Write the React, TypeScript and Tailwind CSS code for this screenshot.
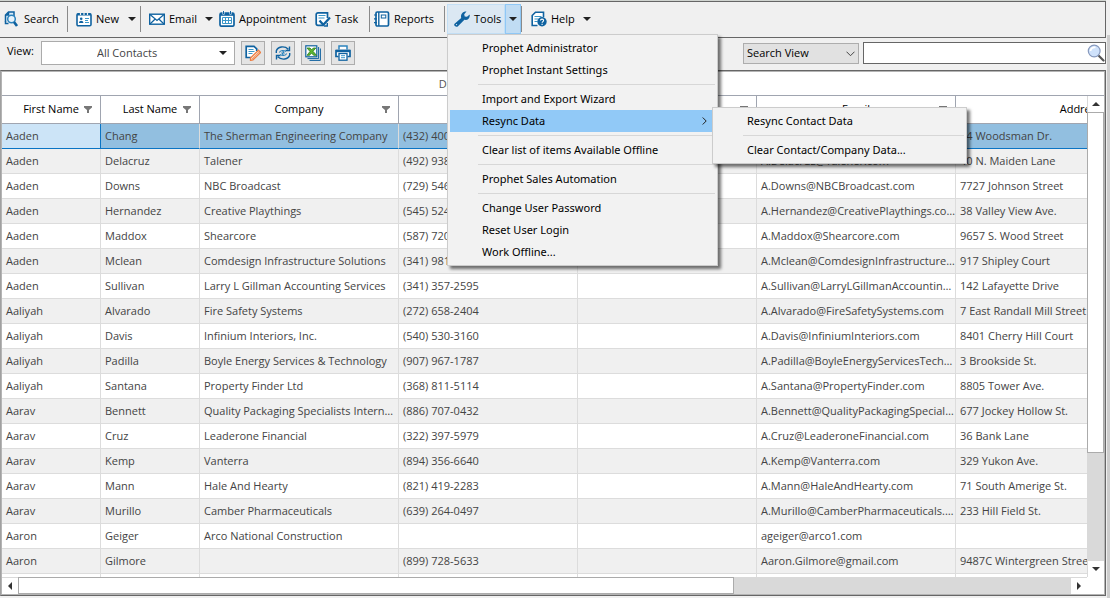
import React from "react";

type Contact = [string, string, string, string, string, string];

const contacts: Contact[] = [
  ["Aaden", "Chang", "The Sherman Engineering Company", "(432) 400-2171", "A.Chang@ShermanEngineering.com", "94 Woodsman Dr."],
  ["Aaden", "Delacruz", "Talener", "(492) 938-4410", "A.Delacruz@Talener.com", "40 N. Maiden Lane"],
  ["Aaden", "Downs", "NBC Broadcast", "(729) 546-3302", "A.Downs@NBCBroadcast.com", "7727 Johnson Street"],
  ["Aaden", "Hernandez", "Creative Playthings", "(545) 524-1198", "A.Hernandez@CreativePlaythings.com", "38 Valley View Ave."],
  ["Aaden", "Maddox", "Shearcore", "(587) 720-6054", "A.Maddox@Shearcore.com", "9657 S. Wood Street"],
  ["Aaden", "Mclean", "Comdesign Infrastructure Solutions", "(341) 981-7720", "A.Mclean@ComdesignInfrastructure.com", "917 Shipley Court"],
  ["Aaden", "Sullivan", "Larry L Gillman Accounting Services", "(341) 357-2595", "A.Sullivan@LarryLGillmanAccounting.com", "142 Lafayette Drive"],
  ["Aaliyah", "Alvarado", "Fire Safety Systems", "(272) 658-2404", "A.Alvarado@FireSafetySystems.com", "7 East Randall Mill Street"],
  ["Aaliyah", "Davis", "Infinium Interiors, Inc.", "(540) 530-3160", "A.Davis@InfiniumInteriors.com", "8401 Cherry Hill Court"],
  ["Aaliyah", "Padilla", "Boyle Energy Services & Technology", "(907) 967-1787", "A.Padilla@BoyleEnergyServicesTechnology.com", "3 Brookside St."],
  ["Aaliyah", "Santana", "Property Finder Ltd", "(368) 811-5114", "A.Santana@PropertyFinder.com", "8805 Tower Ave."],
  ["Aarav", "Bennett", "Quality Packaging Specialists International", "(886) 707-0432", "A.Bennett@QualityPackagingSpecialists.com", "677 Jockey Hollow St."],
  ["Aarav", "Cruz", "Leaderone Financial", "(322) 397-5979", "A.Cruz@LeaderoneFinancial.com", "36 Bank Lane"],
  ["Aarav", "Kemp", "Vanterra", "(894) 356-6640", "A.Kemp@Vanterra.com", "329 Yukon Ave."],
  ["Aarav", "Mann", "Hale And Hearty", "(821) 419-2283", "A.Mann@HaleAndHearty.com", "71 South Amerige St."],
  ["Aarav", "Murillo", "Camber Pharmaceuticals", "(639) 264-0497", "A.Murillo@CamberPharmaceuticals.com", "233 Hill Field St."],
  ["Aaron", "Geiger", "Arco National Construction", "", "ageiger@arco1.com", ""],
  ["Aaron", "Gilmore", "", "(899) 728-5633", "Aaron.Gilmore@gmail.com", "9487C Wintergreen Street"],
  ["", "", "", "", "", ""],
];

const Svg = ({ children, size = 16 }: { children: React.ReactNode; size?: number }) => (
  <svg width={size} height={size} viewBox="0 0 16 16" fill="none" stroke="#0f62a0" strokeWidth="1.5" aria-hidden="true" className="shrink-0">
    {children}
  </svg>
);

const SearchDocIcon = () => (
  <Svg>
    <path d="M1.5 11V4l3-3H10v4" fill="#dcecf7" />
    <path d="M1.500 4.500h3.500V1z" fill="#0f62a0" strokeWidth=".5" />
    <path d="M1.500 10.500v2h3" />
    <circle cx="7.500" cy="8" r="3.800" fill="#e8f3fb" stroke="#2b83bd" />
    <path d="M10 11l3 4" strokeWidth="2.600" />
  </Svg>
);
const NewIcon = () => (
  <Svg>
    <rect x="1" y="2.700" width="14" height="12" rx="1.300" fill="#fff" strokeWidth="1.600" />
    <path d="M1 3.500h14" strokeWidth="2" />
    <path d="M4.500 1v3M8 1v3M11.500 1v3" stroke="#f0f0f0" strokeWidth="1.200" />
    <circle cx="5.200" cy="7.800" r="1.300" fill="#0f62a0" stroke="none" />
    <path d="M3 12c0-3 4.400-3 4.400 0z" fill="#0f62a0" stroke="none" />
    <path d="M9 7.500h4M9 9.500h3M9 11.500h4" strokeWidth="1" stroke="#3b97c9" />
  </Svg>
);
const EmailIcon = () => (
  <Svg>
    <rect x=".7" y="3.200" width="14.600" height="10" fill="#fff" strokeWidth="1.400" />
    <path d="M1 3.500l7 6 7-6M1 13l5.200-5M15 13L9.800 8" strokeWidth="1.200" />
  </Svg>
);
const CalendarIcon = () => (
  <Svg>
    <rect x="1" y="2.200" width="14" height="13" rx="1.500" fill="#fff" strokeWidth="1.700" />
    <path d="M1 3.500h14" strokeWidth="2.600" />
    <path d="M4.500 0v3.400M11.500 0v3.400" stroke="#fff" strokeWidth="2" />
    <path d="M4.500 0v3M11.500 0v3" strokeWidth="1" />
    <path d="M3.500 6.500h9v6h-9zM3.500 9.500h9M6.500 6.500v6M9.500 6.500v6" stroke="#3b97c9" strokeWidth="1" />
  </Svg>
);
const TaskIcon = () => (
  <Svg>
    <path d="M12.500 7V1.800H3A1.800 1.800 0 0 0 1.200 3.600v9A1.800 1.800 0 0 0 3 14.400h5" fill="#fff" strokeWidth="1.700" />
    <path d="M3.500 4.500h7M3.500 7h6" strokeWidth="1" stroke="#3b97c9" />
    <path d="M4.500 9.500l3.800 4.300L15 6.500" strokeWidth="2.200" />
    <path d="M12.300 12v3H9" strokeWidth="1.400" />
  </Svg>
);
const ReportsIcon = () => (
  <Svg>
    <rect x="2" y="1" width="12.500" height="14" rx="1.200" fill="#fff" strokeWidth="1.700" />
    <path d="M4.800 1v14" strokeWidth="1.400" />
    <path d="M0 4h3M0 7.800h3M0 11.600h3" strokeWidth="1.200" />
    <rect x="7.300" y="4" width="4.500" height="3" strokeWidth="1" />
  </Svg>
);
const WrenchIcon = () => (
  <Svg>
    <path
      d="M.6 12.700 7.200 6.900C6.300 3.500 8.700.3 12.500.6L10.200 3.200l.5 2.200 2.300.4L15.700 3.500c.6 3.600-2.100 6.100-5.300 5.300L4 15.200C2.200 16.700-1 14.600.6 12.700z"
      fill="#0f62a0"
      stroke="none"
    />
    <circle cx="2.500" cy="13.600" r=".7" fill="#dbe8f4" stroke="none" />
  </Svg>
);
const HelpIcon = () => (
  <Svg>
    <path d="M12.500 6V1.200H4.500L1.200 4.500v10h5.300" fill="#fff" strokeWidth="1.600" />
    <path d="M3.500 5.500h7M3.500 8h4M3.500 10.500h3" strokeWidth="1" stroke="#3b97c9" />
    <circle cx="11" cy="10.800" r="4.700" fill="#0f62a0" stroke="none" />
    <path d="M9.500 9.600c0-2 3.100-2 3.100 0 0 1-1.500 1-1.500 2.200M11.100 12.700v1.200" stroke="#fff" strokeWidth="1.100" />
  </Svg>
);
const EditIcon = () => (
  <Svg>
    <path d="M6 12.500H1.200V1.300H9l2.700 2.500V6" fill="#fff" strokeWidth="1.700" />
    <path d="M3.500 4.500h5M3.500 6.500h6M3.500 8.500h4" strokeWidth="1" stroke="#3b97c9" />
    <path d="M5.500 13L13.500 5.300l2 2.200-7.500 7.300-2.500.6z" fill="#fbe3d3" stroke="#ee7f43" strokeWidth="1.300" />
    <path d="M7 14l7-7" stroke="#ee7f43" strokeWidth=".7" />
  </Svg>
);
const RefreshIcon = () => (
  <Svg>
    <path d="M1.300 8V6C2.500 1.500 9.500.5 13.300 4.200M14.500 1.500v4h-4" strokeWidth="1.400" />
    <path d="M14.700 8v2c-1.200 4.500-8.200 5.500-12 1.800M1.500 14.500v-4h4" strokeWidth="1.400" />
    <path d="M4.300 7.500c1.200-2.400 4.600-2.600 6.500-.8M11.700 8.500c-1.200 2.400-4.600 2.600-6.500.8M7.500 5.500l1.500 2.500H7l1.500 2.500" stroke="#2b83bd" strokeWidth="1.100" />
  </Svg>
);
const ExcelIcon = () => (
  <Svg>
    <path d="M4.500 15.400h10.900V3.500" strokeWidth="1" />
    <path d="M2.500 13.600h11.100V2" strokeWidth="1" />
    <rect x=".8" y=".8" width="11" height="11" fill="#fff" strokeWidth="1.200" />
    <path d="M2 3h3l1.600 1.800L8.400 3h2.400L8 6.300l3.500 4H8.600L6.500 8 4.600 10.300H2l3-3.800z" fill="#5cb531" stroke="#2d7d1d" strokeWidth=".8" />
  </Svg>
);
const PrintIcon = () => (
  <Svg>
    <path d="M4 4.500V1h8v3.500" fill="#fff" stroke="#2b83bd" />
    <path d="M3.500 11.500H1V5.500h14v6h-2.500" strokeWidth="1.700" fill="#fff" />
    <path d="M1 6h14" strokeWidth="2.400" />
    <rect x="4" y="8.500" width="8" height="6.700" fill="#fff" strokeWidth="1.300" />
    <path d="M6 10.700h4M6 12.700h4" strokeWidth="1" stroke="#3b97c9" />
  </Svg>
);

const Caret = ({ className = "" }: { className?: string }) => (
  <svg width="8" height="4" viewBox="0 0 8 4" className={`shrink-0 ${className}`} aria-hidden="true">
    <path d="M0 0h8L4 4z" fill="#222" />
  </svg>
);

const Funnel = () => (
  <svg width="8" height="7" viewBox="0 0 8 7" className="absolute right-2 top-[10px]" aria-hidden="true">
    <path d="M0 0h8v1.500L5 4v3H3V4L0 1.500z" fill="#777" />
  </svg>
);

const Divider = () => <span className="h-[26px] w-px shrink-0 bg-[#8a8a8a]" />;

const ToolButton = ({ icon, label, className, caret }: { icon: React.ReactNode; label: string; className: string; caret?: boolean }) => (
  <button type="button" className={`flex h-[30px] shrink-0 items-center gap-1 ${className}`}>
    {icon}
    <span className="whitespace-nowrap">{label}</span>
    {caret && <Caret className="ml-auto" />}
  </button>
);

const MenuItem = ({ label, active }: { label: string; active?: boolean }) => (
  <button
    type="button"
    role="menuitem"
    className={`flex h-[22px] w-full items-center justify-between pl-8 pr-2 text-left whitespace-nowrap ${active ? "bg-[#91c9f7]" : ""}`}
  >
    {label}
    {active && (
      <svg width="5" height="8" viewBox="0 0 5 8" fill="none" stroke="#222" aria-hidden="true">
        <path d="M.7.5L4.200 4 .7 7.500" />
      </svg>
    )}
  </button>
);
const MenuLine = () => <div role="separator" className="my-[3px] ml-7 h-px bg-[#d7d7d7]" />;

const menuBox =
  "absolute border border-[#ccc] bg-[#f2f2f2] p-[2px] font-['Noto_Sans','Open_Sans',sans-serif] shadow-[3px_3px_3px_rgba(0,0,0,0.55)]";

const ToolsMenu = () => (
  <div role="menu" className={`${menuBox} left-0 top-[30px] z-20 w-[271px]`}>
    <MenuItem label="Prophet Administrator" />
    <MenuItem label="Prophet Instant Settings" />
    <MenuLine />
    <MenuItem label="Import and Export Wizard" />
    <div className="relative">
      <MenuItem label="Resync Data" active />
      <div role="menu" className={`${menuBox} -top-[3px] left-[262px] w-[255px]`}>
        <MenuItem label="Resync Contact Data" />
        <MenuLine />
        <MenuItem label="Clear Contact/Company Data..." />
      </div>
    </div>
    <MenuLine />
    <MenuItem label="Clear list of items Available Offline" />
    <MenuLine />
    <MenuItem label="Prophet Sales Automation" />
    <MenuLine />
    <MenuItem label="Change User Password" />
    <MenuItem label="Reset User Login" />
    <MenuItem label="Work Offline..." />
  </div>
);

const Toolbar = () => (
  <div className="flex h-[37px] items-center border border-l-0 border-[#666] bg-[#f0f0f0] pb-[2px] pl-1">
    <ToolButton icon={<SearchDocIcon />} label="Search" className="w-[63px]" />
    <Divider />
    <ToolButton icon={<NewIcon />} label="New" className="w-[72px] pl-2 pr-1" caret />
    <Divider />
    <ToolButton icon={<EmailIcon />} label="Email" className="w-[72px] pl-2" caret />
    <ToolButton icon={<CalendarIcon />} label="Appointment" className="w-24 pl-[6px]" />
    <ToolButton icon={<TaskIcon />} label="Task" className="w-[60px] pl-[6px]" />
    <Divider />
    <ToolButton icon={<ReportsIcon />} label="Reports" className="w-[74px] pl-1" />
    <Divider />
    <div className="relative ml-[2px] flex h-[30px] w-[74px] shrink-0">
      <button type="button" className="flex flex-1 items-center gap-1 border border-[#c3dff5] bg-[#dbe8f3] pl-[6px]">
        <WrenchIcon />
        Tools
      </button>
      <button type="button" aria-label="Open tools menu" className="flex w-4 items-center justify-center border border-[#90c8f6] bg-[#c0dcf3]">
        <Caret />
      </button>
      <ToolsMenu />
    </div>
    <Divider />
    <ToolButton icon={<HelpIcon />} label="Help" className="w-[69px] pl-[9px]" caret />
  </div>
);

const IconButton = ({ label, children }: { label: string; children: React.ReactNode }) => (
  <button type="button" aria-label={label} className="flex size-6 shrink-0 items-center justify-center border border-[#adadad] bg-[#e4e4e4]">
    {children}
  </button>
);

const FilterBar = () => (
  <div className="flex h-8 items-center pb-[2px]">
    <div className="flex flex-1 items-center gap-[6px] pl-[7px]">
      <label htmlFor="view" className="w-7 pb-1">View:</label>
      <div className="relative">
        <select id="view" className="block h-6 w-[194px] appearance-none border border-[#ababab] bg-white pl-[55px] text-[#444]">
          <option>All Contacts</option>
        </select>
        <Caret className="pointer-events-none absolute right-2 top-[10px]" />
      </div>
      <IconButton label="Edit view"><EditIcon /></IconButton>
      <IconButton label="Refresh"><RefreshIcon /></IconButton>
      <IconButton label="Export to Excel"><ExcelIcon /></IconButton>
      <IconButton label="Print"><PrintIcon /></IconButton>
    </div>
    <div className="flex w-[363px] shrink-0 items-center gap-1">
      <div className="relative">
        <select aria-label="Search scope" className="block h-[21px] w-[116px] appearance-none border border-[#adadad] bg-[#e1e1e1] pl-[3px]">
          <option>Search View</option>
        </select>
        <svg width="9" height="6" viewBox="0 0 9 6" fill="none" stroke="#444" className="pointer-events-none absolute right-1 top-2" aria-hidden="true">
          <path d="M.5.700l4 4 4-4" />
        </svg>
      </div>
      <div className="relative flex-1">
        <input type="text" aria-label="Search contacts" className="block h-[22px] w-full border border-[#666] bg-white pl-1 pr-6" />
        <svg width="18" height="18" viewBox="0 0 18 18" className="pointer-events-none absolute right-px top-[2px]" aria-hidden="true">
          <path d="M11.500 11.500l5 5" stroke="#555" strokeWidth="2.200" strokeLinecap="round" />
          <circle cx="7.200" cy="7" r="5.900" fill="#cfe2fb" stroke="#8799bd" strokeWidth="1.200" />
          <path d="M3.500 7a4 4 0 0 1 5-3.500" fill="none" stroke="#fff" strokeWidth="1.800" />
        </svg>
      </div>
    </div>
  </div>
);

const headers = ["First Name", "Last Name", "Company", "Phone", "", "Email", "Address"];

const ContactTable = () => (
  <table className="w-[1204px] table-fixed border-separate border-spacing-0 text-[#444]">
    <colgroup>
      <col className="w-[99px]" />
      <col className="w-[99px]" />
      <col className="w-[199px]" />
      <col className="w-[179px]" />
      <col className="w-[179px]" />
      <col className="w-[199px]" />
      <col className="w-[250px]" />
    </colgroup>
    <thead>
      <tr>
        {headers.map((h, i) => (
          <th key={i} scope="col" className="relative h-7 border-b border-r border-[#a0a5b0] p-0 pb-[2px] text-center font-normal text-black">
            {h}
            <Funnel />
          </th>
        ))}
      </tr>
    </thead>
    <tbody>
      {contacts.map(([first, last, company, phone, email, address], r) => {
        const tone = r === 0 ? "bg-[#92bfe0] border-b-[#0a74c4]" : r % 2 ? "bg-[#f0f0f0] border-b-[#dcdcdc]" : "bg-white border-b-[#dcdcdc]";
        return (
          <tr key={r}>
            {[first, last, company, phone, "", email, address].map((value, c) => (
              <td
                key={c}
                className={`h-[25px] truncate border-b border-r py-0 pl-1 ${c === 5 ? "pr-0" : "pr-1"} ${
                  r === 0 && c === 0 ? "border-b-[#0a74c4] border-r-[#0a74c4] bg-[#cce4f7]" : `border-r-[#dcdcdc] ${tone}`
                }`}
              >
                {value}
              </td>
            ))}
          </tr>
        );
      })}
    </tbody>
  </table>
);

const Arrow = ({ d, label }: { d: string; label: string }) => (
  <button type="button" aria-label={label} className="flex size-4 shrink-0 items-center justify-center bg-white">
    <svg width="8" height="8" viewBox="0 0 8 8" aria-hidden="true">
      <path d={d} fill="#333" />
    </svg>
  </button>
);

const Grid = () => (
  <div className="flex min-h-0 flex-1 border border-[#666] border-l-[#a0a0a0]">
    <div className="flex min-w-0 flex-1 flex-col border border-[#b4b4b4] bg-white">
      <div className="flex h-6 shrink-0 items-center justify-center border-b border-[#a0a5b0] text-[#555]">
        Drag a column here to group by this column.
      </div>
      <div className="flex min-h-0 flex-1">
        <div className="min-w-0 flex-1 overflow-hidden">
          <ContactTable />
        </div>
        <div className="flex w-[17px] shrink-0 flex-col items-center bg-[#d9d9d9]">
          <Arrow label="Scroll up" d="M0 6l4-4 4 4z" />
          <div className="w-full flex-1">
            <div className="h-[76%] border border-[#ababab] bg-white" />
          </div>
          <Arrow label="Scroll down" d="M0 2h8L4 6z" />
        </div>
      </div>
      <div className="flex h-[17px] shrink-0 items-center bg-[#d9d9d9]">
        <Arrow label="Scroll left" d="M6 0v8L2 4z" />
        <div className="h-full flex-1">
          <div className="h-full w-[68%] border border-[#ababab] bg-white" />
        </div>
        <Arrow label="Scroll right" d="M2 0v8l4-4z" />
        <div className="h-full w-[17px] bg-white" />
      </div>
    </div>
  </div>
);

export default function App() {
  return (
    <div className="flex h-screen overflow-hidden bg-[#f0f0f0] font-['Open_Sans','Noto_Sans',sans-serif] text-[11px] leading-4 text-black">
      <main className="flex min-w-0 flex-1 flex-col border-t border-[#d0d4d0] pb-[2px]">
        <Toolbar />
        <FilterBar />
        <Grid />
      </main>
      <div className="flex w-1 shrink-0 flex-col pl-px pt-[35px]">
        <div className="flex-1 bg-[#cdcdcd]" />
      </div>
    </div>
  );
}
